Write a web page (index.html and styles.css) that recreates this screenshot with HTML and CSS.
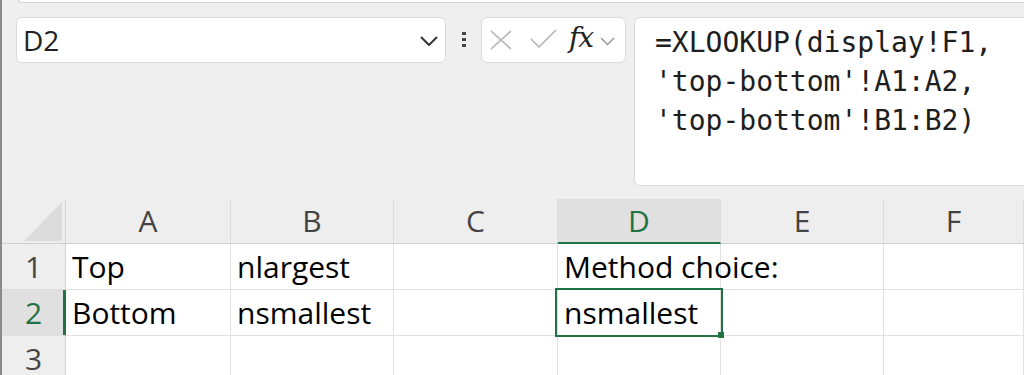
FILE: index.html
```html
<!DOCTYPE html>
<html lang="en">
<head>
    <meta charset="utf-8">
    <title>XLOOKUP display</title>
<link rel="stylesheet" href="styles.css">
</head>
<body>
<div class="app">
    <div class="topbar">
        <div class="ribbon-edge"></div>
        <div class="formula-row">
            <div class="namebox">
                <span class="cellref">D2</span>
                <svg class="chev" width="18" height="10" viewBox="0 0 18 10"><path d="M1 1 L9 9 L17 1" fill="none" stroke="#333" stroke-width="2"/></svg>
            </div>
            <div class="dots"><span></span><span></span><span></span></div>
            <div class="fx-buttons">
                <svg class="ic-x" width="22" height="20" viewBox="0 0 22 20"><path d="M1 1 L21 19 M21 1 L1 19" stroke="#b4b4b4" stroke-width="1.6" fill="none"/></svg>
                <svg class="ic-check" width="27" height="19" viewBox="0 0 27 19"><path d="M1 10 L9 18 L26 1" stroke="#b4b4b4" stroke-width="1.6" fill="none"/></svg>
                <span class="fx">fx</span>
                <svg class="ic-down" width="15" height="9" viewBox="0 0 15 9"><path d="M1 1 L7.5 7.5 L14 1" stroke="#999" stroke-width="1.5" fill="none"/></svg>
            </div>
            <div class="formula">
                <div class="fline">=XLOOKUP(display!F1,</div>
                <div class="fline">'top-bottom'!A1:A2,</div>
                <div class="fline">'top-bottom'!B1:B2)</div>
            </div>
        </div>
    </div>

    <div class="sheet">
        <div class="grid">
            <div class="hd corner"><svg width="63" height="44" viewBox="0 0 63 44"><polygon points="60,3 60,42 22,42" fill="#dcdcdc"/></svg></div>
            <div class="hd col">A</div>
            <div class="hd col">B</div>
            <div class="hd col">C</div>
            <div class="hd col active">D</div>
            <div class="hd col">E</div>
            <div class="hd col">F</div>

            <div class="rh">1</div>
            <div class="cell">Top</div>
            <div class="cell">nlargest</div>
            <div class="cell"></div>
            <div class="cell">Method choice:</div>
            <div class="cell"></div>
            <div class="cell"></div>

            <div class="rh active">2</div>
            <div class="cell">Bottom</div>
            <div class="cell">nsmallest</div>
            <div class="cell"></div>
            <div class="cell">nsmallest</div>
            <div class="cell"></div>
            <div class="cell"></div>

            <div class="rh">3</div>
            <div class="cell"></div>
            <div class="cell"></div>
            <div class="cell"></div>
            <div class="cell"></div>
            <div class="cell"></div>
            <div class="cell"></div>
        </div>
        <div class="selection"><span class="handle"></span></div>
    </div>
</div>
</body>
</html>
```
FILE: styles.css
```css
html, body {
    margin: 0;
    height: 100%;
    overflow: hidden;
}
body {
    background: #ffffff;
    font-family: "Open Sans", "Liberation Sans", sans-serif;
}
.app {
    height: 375px;
    border-left: 2px solid #8a8a8a;
    overflow: hidden;
}

/* formula bar area */
.topbar {
    height: 199px;
    background: #efefef;
}
.ribbon-edge {
    height: 2px;
    margin-left: 16px;
    background: #fff;
    border-bottom: 1px solid #d2d2d2;
    border-left: 1px solid #d2d2d2;
    border-bottom-left-radius: 6px;
}
.formula-row {
    display: flex;
    align-items: flex-start;
    padding: 14px 0 0 14px;
    margin-right: -30px;
}
.namebox {
    box-sizing: border-box;
    width: 430px;
    height: 46px;
    background: #fff;
    border: 1px solid #dadada;
    border-radius: 6px;
    display: flex;
    align-items: center;
    padding: 0 7px 0 6px;
}
.cellref {
    flex: 1;
    font-size: 28px;
    color: #222;
}
.chev {
    margin-top: 2px;
}
.dots {
    width: 35px;
    height: 46px;
    display: flex;
    flex-direction: column;
    align-items: center;
    padding-top: 15px;
    box-sizing: border-box;
    gap: 3px;
}
.dots span {
    width: 4px;
    height: 3px;
    background: #444;
}
.fx-buttons {
    box-sizing: border-box;
    width: 145px;
    height: 46px;
    background: #fff;
    border: 1px solid #dadada;
    border-radius: 6px;
    display: flex;
    align-items: center;
    padding-left: 8px;
}
.ic-check {
    margin-left: 18px;
    margin-top: -3px;
}
.fx {
    margin-left: 12px;
    font-family: "DejaVu Serif", "Liberation Serif", serif;
    font-style: italic;
    font-size: 28px;
    color: #222;
    line-height: 1;
    margin-top: -4px;
    letter-spacing: -1px;
}
.ic-down {
    margin-left: 7px;
    margin-top: 3px;
}
.formula {
    flex: 1;
    box-sizing: border-box;
    height: 169px;
    margin-left: 8px;
    background: #fff;
    border: 1px solid #dadada;
    border-radius: 6px;
    padding: 5px 0 0 20px;
    font-family: "DejaVu Sans Mono", "Liberation Mono", monospace;
    font-size: 28px;
    line-height: 39px;
    color: #1e1e1e;
}
.fline {
    white-space: nowrap;
}

/* sheet grid */
.sheet {
    position: relative;
}
.grid {
    display: grid;
    grid-template-columns: 64px 165px 163px 164px 163px 163px 1fr;
    grid-template-rows: 45px 46px 46px 46px;
}
.hd {
    background: #eeeeee;
    border-right: 1px solid #dcdcdc;
    border-bottom: 1px solid #cfcfcf;
    font-size: 30px;
    color: #444;
    text-align: center;
    line-height: 44px;
}
.corner {
    border-right-color: #d4d4d4;
}
.corner svg {
    display: block;
}
.hd.active {
    background: #e0e0e0;
    color: #217346;
    border-bottom: 2px solid #217346;
    line-height: 43px;
}
.rh {
    background: #eeeeee;
    border-right: 1px solid #d4d4d4;
    border-bottom: 1px solid #dedede;
    font-size: 30px;
    color: #444;
    text-align: center;
    line-height: 45px;
}
.rh.active {
    background: #e0e0e0;
    color: #217346;
    box-shadow: inset -2px 0 0 #217346;
    border-right-color: #217346;
}
.cell {
    border-right: 1px solid #e1e1e1;
    border-bottom: 1px solid #e1e1e1;
    font-size: 30px;
    color: #000;
    line-height: 45px;
    padding-left: 6px;
    white-space: nowrap;
}
.selection {
    position: absolute;
    left: 553px;
    top: 89px;
    width: 168px;
    height: 49px;
    box-sizing: border-box;
    border: 2px solid #217346;
}
.handle {
    position: absolute;
    right: -4px;
    bottom: -4px;
    width: 6px;
    height: 6px;
    background: #217346;
    border: 1px solid #fff;
    border-left: 0;
    border-top: 0;
}
```
